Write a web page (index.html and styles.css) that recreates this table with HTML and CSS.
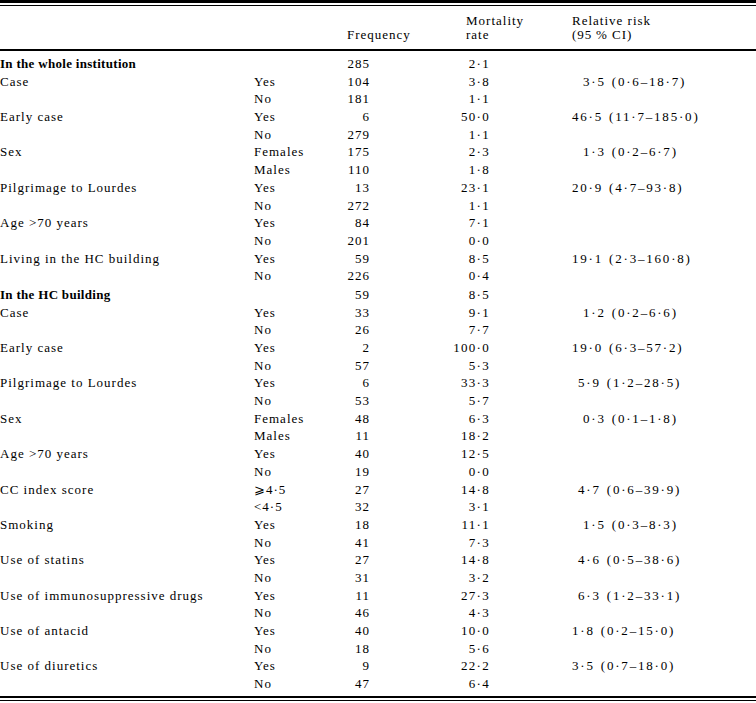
FILE: index.html
```html
<!DOCTYPE html>
<html lang="en">
<head>
<meta charset="utf-8">
<title>Mortality table</title>
<link rel="stylesheet" href="styles.css">
</head>
<body>
<div class="frame">
<table class="tbl">
<colgroup>
<col class="c-label"><col class="c-level"><col class="c-freq"><col class="c-mort"><col class="c-rr"><col class="c-rest">
</colgroup>
<thead>
<tr>
<th></th><th></th><th>Frequency</th><th class="h-mort">Mortality<br>rate</th><th colspan="2">Relative risk<br>(95&#8201;% CI)</th>
</tr>
</thead>
<tbody>
<tr class="sec"><td>In the whole institution</td><td></td><td class="n">285</td><td class="m">2·1</td><td class="r"></td><td></td></tr>
<tr><td>Case</td><td>Yes</td><td class="n">104</td><td class="m">3·8</td><td class="r i2">3·5 (0·6–18·7)</td><td></td></tr>
<tr><td></td><td>No</td><td class="n">181</td><td class="m">1·1</td><td class="r"></td><td></td></tr>
<tr><td>Early case</td><td>Yes</td><td class="n">6</td><td class="m">50·0</td><td class="r">46·5 (11·7–185·0)</td><td></td></tr>
<tr><td></td><td>No</td><td class="n">279</td><td class="m">1·1</td><td class="r"></td><td></td></tr>
<tr><td>Sex</td><td>Females</td><td class="n">175</td><td class="m">2·3</td><td class="r i2">1·3 (0·2–6·7)</td><td></td></tr>
<tr><td></td><td>Males</td><td class="n">110</td><td class="m">1·8</td><td class="r"></td><td></td></tr>
<tr><td>Pilgrimage to Lourdes</td><td>Yes</td><td class="n">13</td><td class="m">23·1</td><td class="r">20·9 (4·7–93·8)</td><td></td></tr>
<tr><td></td><td>No</td><td class="n">272</td><td class="m">1·1</td><td class="r"></td><td></td></tr>
<tr><td>Age &gt;70 years</td><td>Yes</td><td class="n">84</td><td class="m">7·1</td><td class="r"></td><td></td></tr>
<tr><td></td><td>No</td><td class="n">201</td><td class="m">0·0</td><td class="r"></td><td></td></tr>
<tr><td>Living in the HC building</td><td>Yes</td><td class="n">59</td><td class="m">8·5</td><td class="r">19·1 (2·3–160·8)</td><td></td></tr>
<tr><td></td><td>No</td><td class="n">226</td><td class="m">0·4</td><td class="r"></td><td></td></tr>
<tr class="sec sec-gap"><td>In the HC building</td><td></td><td class="n">59</td><td class="m">8·5</td><td class="r"></td><td></td></tr>
<tr><td>Case</td><td>Yes</td><td class="n">33</td><td class="m">9·1</td><td class="r i2">1·2 (0·2–6·6)</td><td></td></tr>
<tr><td></td><td>No</td><td class="n">26</td><td class="m">7·7</td><td class="r"></td><td></td></tr>
<tr><td>Early case</td><td>Yes</td><td class="n">2</td><td class="m">100·0</td><td class="r">19·0 (6·3–57·2)</td><td></td></tr>
<tr><td></td><td>No</td><td class="n">57</td><td class="m">5·3</td><td class="r"></td><td></td></tr>
<tr><td>Pilgrimage to Lourdes</td><td>Yes</td><td class="n">6</td><td class="m">33·3</td><td class="r i1">5·9 (1·2–28·5)</td><td></td></tr>
<tr><td></td><td>No</td><td class="n">53</td><td class="m">5·7</td><td class="r"></td><td></td></tr>
<tr><td>Sex</td><td>Females</td><td class="n">48</td><td class="m">6·3</td><td class="r i2">0·3 (0·1–1·8)</td><td></td></tr>
<tr><td></td><td>Males</td><td class="n">11</td><td class="m">18·2</td><td class="r"></td><td></td></tr>
<tr><td>Age &gt;70 years</td><td>Yes</td><td class="n">40</td><td class="m">12·5</td><td class="r"></td><td></td></tr>
<tr><td></td><td>No</td><td class="n">19</td><td class="m">0·0</td><td class="r"></td><td></td></tr>
<tr><td>CC index score</td><td>⩾4·5</td><td class="n">27</td><td class="m">14·8</td><td class="r i1">4·7 (0·6–39·9)</td><td></td></tr>
<tr><td></td><td>&lt;4·5</td><td class="n">32</td><td class="m">3·1</td><td class="r"></td><td></td></tr>
<tr><td>Smoking</td><td>Yes</td><td class="n">18</td><td class="m">11·1</td><td class="r i2">1·5 (0·3–8·3)</td><td></td></tr>
<tr><td></td><td>No</td><td class="n">41</td><td class="m">7·3</td><td class="r"></td><td></td></tr>
<tr><td>Use of statins</td><td>Yes</td><td class="n">27</td><td class="m">14·8</td><td class="r i1">4·6 (0·5–38·6)</td><td></td></tr>
<tr><td></td><td>No</td><td class="n">31</td><td class="m">3·2</td><td class="r"></td><td></td></tr>
<tr><td>Use of immunosuppressive drugs</td><td>Yes</td><td class="n">11</td><td class="m">27·3</td><td class="r i1">6·3 (1·2–33·1)</td><td></td></tr>
<tr><td></td><td>No</td><td class="n">46</td><td class="m">4·3</td><td class="r"></td><td></td></tr>
<tr><td>Use of antacid</td><td>Yes</td><td class="n">40</td><td class="m">10·0</td><td class="r">1·8 (0·2–15·0)</td><td></td></tr>
<tr><td></td><td>No</td><td class="n">18</td><td class="m">5·6</td><td class="r"></td><td></td></tr>
<tr><td>Use of diuretics</td><td>Yes</td><td class="n">9</td><td class="m">22·2</td><td class="r">3·5 (0·7–18·0)</td><td></td></tr>
<tr><td></td><td>No</td><td class="n">47</td><td class="m">6·4</td><td class="r"></td><td></td></tr>
</tbody>
</table>
<div class="rule"></div>
</div>
</body>
</html>
```

FILE: styles.css
```css
html, body {
  margin: 0;
  padding: 0;
  background: #fff;
}

body {
  font-family: "Liberation Serif", "Times New Roman", serif;
  font-size: 13px;
  color: #000;
  letter-spacing: 1px;
}

.frame {
  border-top: 3px solid #000;
  padding-top: 2px;
  width: 756px;
}

.tbl {
  width: 100%;
  table-layout: fixed;
  border-collapse: separate;
  border-spacing: 0;
  border-top: 1px solid #000;
  border-bottom: 2px solid #000;
}

.c-label { width: 254px; }
.c-level { width: 93px; }
.c-freq { width: 83px; }
.c-mort { width: 142px; }
.c-rr { width: 130px; }

.tbl th {
  font-weight: normal;
  text-align: left;
  vertical-align: bottom;
  line-height: 14px;
  padding: 8px 0 7px 0;
  border-bottom: 2px solid #000;
  white-space: nowrap;
}

.tbl th.h-mort {
  padding-left: 36px;
}

.tbl td {
  padding: 0;
  line-height: 17.69px;
  height: 17.69px;
  white-space: nowrap;
  vertical-align: top;
}

.tbl tbody tr:first-child td {
  padding-top: 4px;
}

.tbl tbody tr.sec-gap td {
  padding-top: 1px;
}

.tbl tbody tr:last-child td {
  padding-bottom: 3px;
}

.tbl td.n {
  text-align: right;
  padding-right: 60px;
}

.tbl td.m {
  text-align: right;
  padding-right: 82px;
  letter-spacing: 1.3px;
}

.tbl td.r {
  text-align: left;
  letter-spacing: 1.8px;
  word-spacing: 1px;
  overflow: visible;
}

.tbl td.r.i1 {
  padding-left: 6px;
}

.tbl td.r.i2 {
  padding-left: 11px;
}

.sec td:first-child {
  font-weight: bold;
  letter-spacing: 0.3px;
}

.rule {
  margin-top: 2px;
  border-top: 1px solid #000;
}
```
